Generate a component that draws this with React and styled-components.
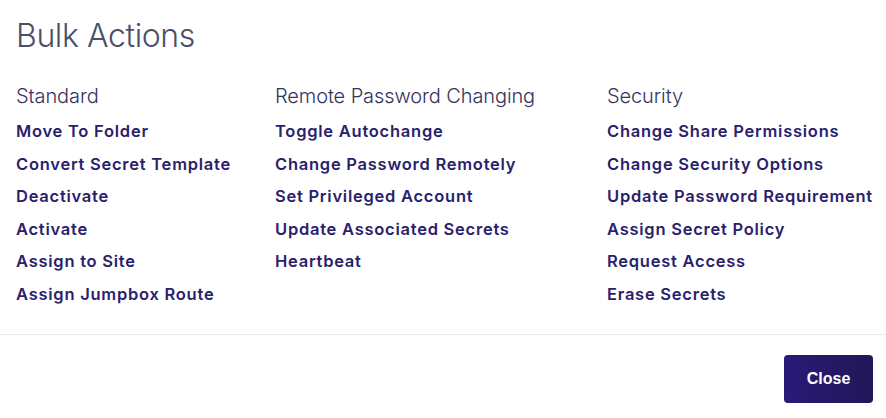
import React from "react";
import styled, { createGlobalStyle } from "styled-components";

const Global = createGlobalStyle`
  html, body { margin: 0; padding: 0; background: #fff; }
  body { font-family: Inter, "Noto Sans", sans-serif; }
`;

const Dialog = styled.div`
  width: 886px;
  height: 418px;
  box-sizing: border-box;
  display: flex;
  flex-direction: column;
  background: #fff;
`;

const Body = styled.div`
  padding: 14px 16px 0 16px;
`;

const Title = styled.h1`
  margin: 0;
  font-size: 32px;
  line-height: 44px;
  font-weight: 300;
  color: #4b4f68;
  letter-spacing: -0.4px;
`;

const Columns = styled.div`
  display: grid;
  grid-template-columns: 259px 332px 1fr;
  margin-top: 25px;
`;

const Column = styled.div`
  display: flex;
  flex-direction: column;
`;

const Heading = styled.h2`
  margin: 0 0 6px 0;
  font-size: 20px;
  line-height: 26px;
  font-weight: 300;
  color: #35325f;
  letter-spacing: -0.1px;
`;

const ActionLink = styled.a`
  font-size: 16.5px;
  line-height: 32.6px;
  font-weight: 600;
  letter-spacing: 0.75px;
  color: #2a216c;
  text-decoration: none;
  cursor: pointer;
  white-space: nowrap;
`;

const Divider = styled.hr`
  margin: 23px 0 0 0;
  border: none;
  border-top: 1px solid #ebebeb;
`;

const Footer = styled.div`
  display: flex;
  justify-content: flex-end;
  padding: 20px 13px 0 0;
`;

const CloseButton = styled.button`
  width: 89px;
  height: 48px;
  border: none;
  border-radius: 4px;
  background: linear-gradient(90deg, #281a78 0%, #221758 100%);
  color: #fff;
  font-family: "Liberation Sans", Arial, sans-serif;
  font-weight: 700;
  font-size: 16px;
  cursor: pointer;
`;

const groups = [
  {
    title: "Standard",
    items: [
      "Move To Folder",
      "Convert Secret Template",
      "Deactivate",
      "Activate",
      "Assign to Site",
      "Assign Jumpbox Route",
    ],
  },
  {
    title: "Remote Password Changing",
    items: [
      "Toggle Autochange",
      "Change Password Remotely",
      "Set Privileged Account",
      "Update Associated Secrets",
      "Heartbeat",
    ],
  },
  {
    title: "Security",
    items: [
      "Change Share Permissions",
      "Change Security Options",
      "Update Password Requirement",
      "Assign Secret Policy",
      "Request Access",
      "Erase Secrets",
    ],
  },
];

export default function App() {
  return (
    <>
      <Global />
      <Dialog>
        <Body>
          <Title>Bulk Actions</Title>
          <Columns>
            {groups.map((g) => (
              <Column key={g.title}>
                <Heading>{g.title}</Heading>
                {g.items.map((it) => (
                  <ActionLink key={it}>{it}</ActionLink>
                ))}
              </Column>
            ))}
          </Columns>
        </Body>
        <Divider />
        <Footer>
          <CloseButton>Close</CloseButton>
        </Footer>
      </Dialog>
    </>
  );
}
